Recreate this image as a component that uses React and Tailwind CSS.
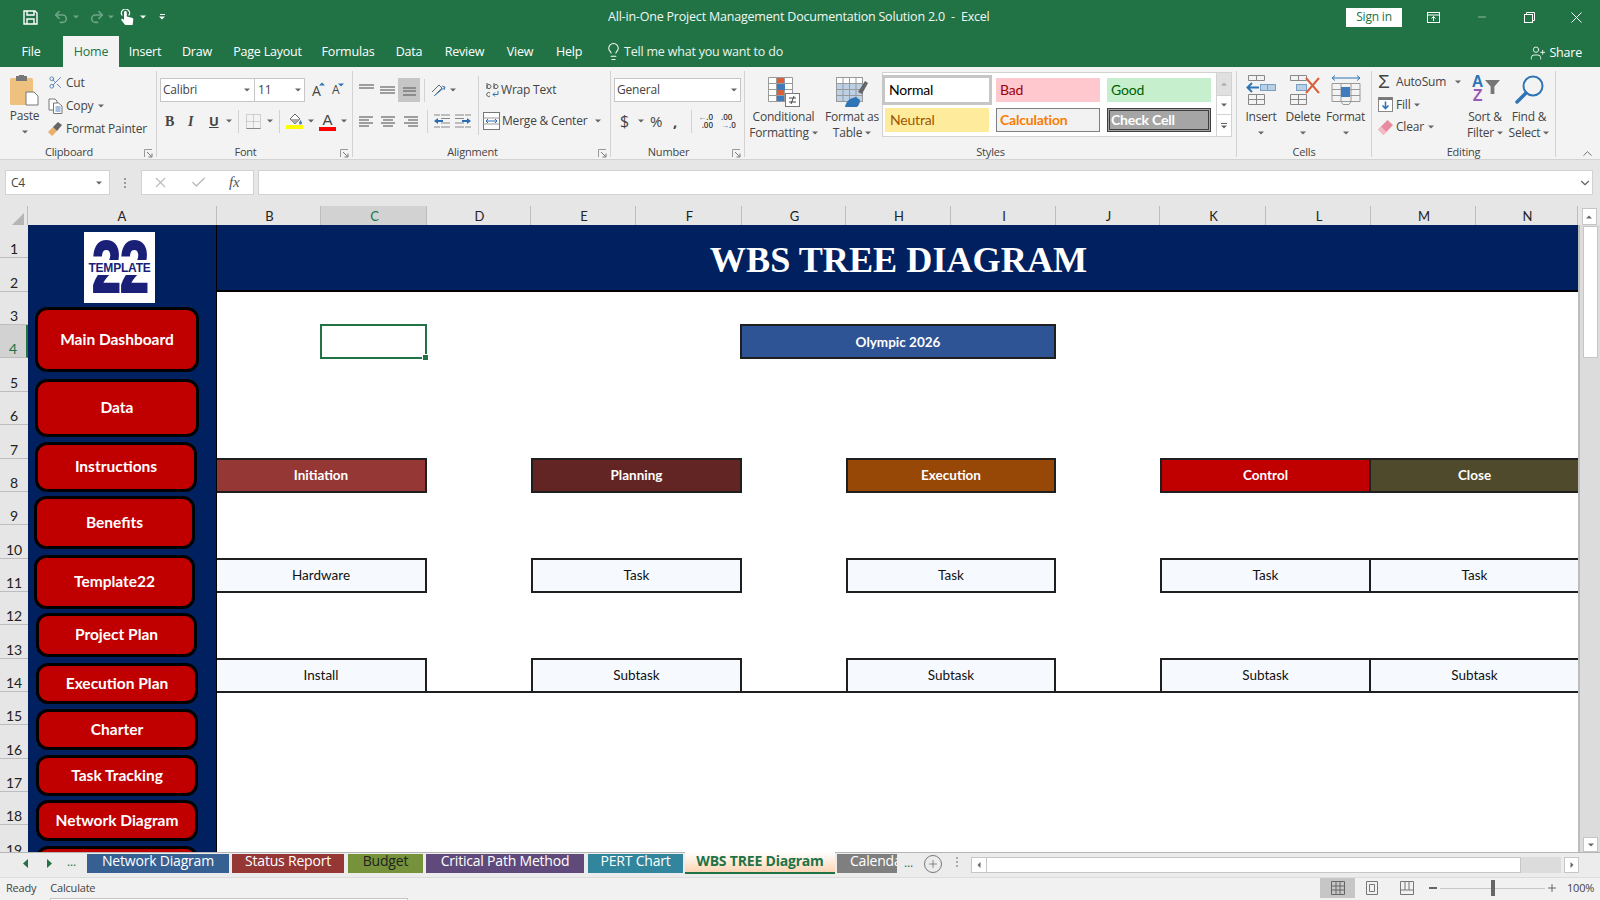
import React from "react";
import { Scissors, Undo2, Redo2, Lightbulb, UserPlus, X, Check, Minus, Plus, ChevronDown, ChevronUp } from "lucide-react";

const Caret = ({ c = "#666", cls = "" }) => (
  <svg width="6" height="4" viewBox="0 0 6 4" className={"shrink-0 " + cls}><path d="M0 0.5h6L3 3.5z" fill={c} /></svg>
);

const Launcher = () => (
  <svg width="9" height="9" viewBox="0 0 9 9" className="mt-[3px] justify-self-end mr-[3px]"><path d="M0.5 8V0.5H8" fill="none" stroke="#999" /><path d="M3 3l4.5 4.5M8 4.5V8H4.5" fill="none" stroke="#777" /></svg>
);

const Group = ({ w, label, launcher, children }) => (
  <div className={"h-[86px] shrink-0 border-r border-[#d2d2d2] flex flex-col " + w}>
    <div className="h-[74px] shrink-0 flex">{children}</div>
    {launcher ? (
      <div className="h-[14px] grid grid-cols-[1fr_18px] items-center text-[11px] leading-[14px] text-[#444]">
        <span className="text-center">{label}</span>
        <Launcher />
      </div>
    ) : (
      <div className="h-[14px] text-center text-[11px] leading-[14px] text-[#444]">{label}</div>
    )}
  </div>
);

const Lines = ({ rows }) => (
  <svg width="15" height="13" viewBox="0 0 15 13">
    {rows.map((r, i) => (
      <path key={i} d={`M${r[0]} ${r[1]}H${r[2]}`} stroke="#666" strokeWidth="1.2" />
    ))}
  </svg>
);

const Save = () => (
  <svg width="15" height="15" viewBox="0 0 15 15" fill="none" stroke="#fff" strokeWidth="1.4"><path d="M1 1h11l2 2v11H1z" /><path d="M4 1v4h7V1M4 14V9h7v5" /></svg>
);

const TouchIcon = () => (
  <svg width="14" height="16" viewBox="0 0 14 16" className="ml-[6px]">
    <path d="M2.3 6.5a4 4 0 1 1 6.4 0" fill="none" stroke="#fff" strokeWidth="1.2" />
    <path d="M4 3.5a1.4 1.4 0 0 1 2.8 0v4l5 1.2c1.2.3 1.7 1 1.5 2.2L12.6 16H5.2L1.4 11.2c-.6-.9.6-2 1.5-1.2L4 11z" fill="#fff" />
  </svg>
);

const PasteIcon = () => (
  <svg width="29" height="31" viewBox="0 0 29 31">
    <rect x="0" y="3" width="23" height="27" rx="1.5" fill="#eec27e" />
    <rect x="6" y="1" width="11" height="5" fill="#777" />
    <rect x="9" y="0" width="5" height="3" fill="#777" />
    <path d="M16 17h8l4 4v9H16z" fill="#fff" stroke="#777" />
  </svg>
);

const CopyIcon = () => (
  <svg width="15" height="16" viewBox="0 0 15 16" fill="#fff" stroke="#777"><path d="M1 1h6l2 2v9H1z" /><path d="M5.5 5h5l3.5 3v7.5H5.5z" /><path d="M7.5 9h5M7.5 11h5M7.5 13h5" stroke="#4a7ebb" /></svg>
);

const PainterIcon = () => (
  <svg width="15" height="14" viewBox="0 0 15 14"><path d="M0 10l5-5 4 4-5 5z" fill="#e8b06a" /><path d="M5 5l5-5 4 3-5 6z" fill="#666" /></svg>
);

const BordersIcon = () => (
  <svg width="15" height="15" viewBox="0 0 15 15" fill="none"><path d="M.5.5h14v14H.5zM7.5.5v14M.5 7.5h14" stroke="#aaa" strokeDasharray="1 1" /><path d="M.5 14.5h14" stroke="#888" /></svg>
);

const FillIcon = () => (
  <svg width="17" height="16" viewBox="0 0 17 16"><path d="M4 6l5-5 5 5-5 5z" fill="#fff" stroke="#666" /><path d="M4 6h10l-5 5z" fill="#aaa" /><path d="M14.5 7s1.5 2 1.5 3a1.5 1.5 0 01-3 0c0-1 1.5-3 1.5-3z" fill="#4a7ebb" /><rect y="12" width="17" height="4" fill="#ffff00" /></svg>
);

const OrientIcon = () => (
  <svg width="16" height="15" viewBox="0 0 16 15" fill="none" stroke="#666"><path d="M1 9l7-7 3 3-7 7" /><path d="M3 13l11-9M11 3l3 1-1 3" stroke="#4a7ebb" /></svg>
);

const Indent = ({ flip }) => (
  <svg width="16" height="14" viewBox="0 0 16 14" className={flip ? "-scale-x-100" : ""}>
    <path d="M7 1h9M7 4.5h9M7 9h9M7 13h9M0 13h6M0 1h6" stroke="#888" strokeWidth="1.2" />
    <path d="M0 7l4-3v2h5v2H4v2z" fill="#2b6cb0" />
  </svg>
);

const MergeIcon = () => (
  <svg width="17" height="18" viewBox="0 0 17 18" fill="none"><rect x=".5" y=".5" width="16" height="17" fill="#fff" stroke="#777" /><path d="M.5 6h16M.5 12h16" stroke="#999" /><path d="M3 9h11M3 9l2-2M3 9l2 2M14 9l-2-2M14 9l-2 2" stroke="#2b6cb0" /></svg>
);

const CondIcon = () => (
  <svg width="32" height="30" viewBox="0 0 32 30">
    <path d="M.5.5h24v24H.5zM8.5.5v24M16.5.5v24M.5 6.5h24M.5 12.5h24M.5 18.5h24" fill="#fff" stroke="#999" />
    <rect x="9" y="1" width="7" height="5" fill="#d9603b" /><rect x="9" y="7" width="8" height="6" fill="#3f7cbf" /><rect x="9" y="13" width="7" height="5" fill="#d9603b" /><rect x="9" y="19" width="7" height="5" fill="#3f7cbf" />
    <rect x="17.5" y="16.5" width="14" height="13" fill="#fff" stroke="#777" />
    <path d="M21 21h7M21 25h7M26 19l-3 8" stroke="#444" />
  </svg>
);

const TableIcon = () => (
  <svg width="32" height="30" viewBox="0 0 32 30">
    <rect x=".5" y=".5" width="26" height="24" fill="#fff" stroke="#999" />
    <rect x="1" y="7" width="25" height="17" fill="#bcd0e6" />
    <path d="M7 .5v24M13.5 .5v24M20 .5v24M.5 6.5h26M.5 12.5h26M.5 18.5h26" stroke="#999" />
    <path d="M22 15l7-11 3 2-6 11z" fill="#666" />
    <path d="M9 30c1-6 5-9 11-10l4 3c0 3-1 5-3 7z" fill="#2f75b5" />
  </svg>
);

const InsertIcon = () => (
  <svg width="30" height="30" viewBox="0 0 30 30" fill="none">
    <path d="M2.5.5h16v5h-16zM10.5.5v5M2.5 19.5h16v10h-16zM10.5 19.5v10M2.5 24.5h16" stroke="#888" />
    <rect x="14.5" y="9.5" width="15" height="6" fill="#b8cfe6" stroke="#7a9fc4" />
    <path d="M21.5 9.5v6" stroke="#7a9fc4" />
    <path d="M13 12.5H2M6 8l-4.5 4.5L6 17" stroke="#2f75b5" strokeWidth="2" />
  </svg>
);

const DeleteIcon = () => (
  <svg width="30" height="30" viewBox="0 0 30 30" fill="none" className="ml-[3px]">
    <path d="M.5.5h16v5H.5zM8.5.5v5M.5 19.5h16v10H.5zM8.5 19.5v10M.5 24.5h16" stroke="#888" />
    <rect x="6.5" y="9.5" width="10" height="6" fill="#b8cfe6" stroke="#7a9fc4" />
    <path d="M16 3l13 15M29 3L16 18" stroke="#d9603b" strokeWidth="2" />
  </svg>
);

const FormatIcon = () => (
  <svg width="30" height="30" viewBox="0 0 30 30" fill="none">
    <path d="M1 3h28M1 3l3-2.5M1 3l3 2.5M29 3l-3-2.5M29 3l-3 2.5" stroke="#2f75b5" />
    <path d="M1 8.5h28v18H1zM1 14.5h28M1 20.5h28M10 8.5v18M20 8.5v18" stroke="#999" />
    <rect x="10" y="12" width="9" height="10" fill="#3f7cbf" />
    <path d="M10 26.5l2 3h6l2-3" stroke="#999" />
  </svg>
);

const FillDown = () => (
  <svg width="15" height="15" viewBox="0 0 15 15" fill="none"><rect x=".5" y=".5" width="14" height="14" fill="#fff" stroke="#888" /><rect x=".5" y=".5" width="14" height="2.5" fill="#777" /><path d="M7.5 4.5v7M4.5 8.5l3 3 3-3" stroke="#2f75b5" strokeWidth="1.6" /></svg>
);

const Eraser = () => (
  <svg width="15" height="15" viewBox="0 0 15 15"><path d="M0 9.5L9.5 0 15 5 5.5 15z" fill="#e88b9c" /><path d="M0 9.5L3 6.5 8.5 12 5.5 15z" fill="#f3bcc5" /></svg>
);

const SortIcon = () => (
  <div className="flex items-center h-[28px]">
    <div className="flex flex-col items-center leading-[14px] font-bold text-[16px] font-['Liberation_Sans',sans-serif] w-[14px]">
      <span className="text-[#2f75b5]">A</span>
      <span className="text-[#9b59b6]">Z</span>
    </div>
    <svg width="15" height="15" viewBox="0 0 16 16" className="-mt-[6px]"><path d="M0 1h16l-6 7v8H6V8z" fill="#777" /></svg>
  </div>
);

const FindIcon = () => (
  <svg width="29" height="29" viewBox="0 0 29 29" fill="none"><circle cx="18" cy="11" r="9.5" stroke="#2f75b5" strokeWidth="2" /><path d="M11 18l-9 9" stroke="#2f75b5" strokeWidth="3.5" strokeLinecap="round" /></svg>
);

const Label2 = ({ a, b, caret }) => (
  <div className="flex flex-col items-center text-[12px] leading-[16px] text-[#444] whitespace-nowrap">
    <span>{a}</span>
    <span className="flex items-center gap-[3px] h-[16px]">{b}{caret && <Caret />}</span>
  </div>
);

const Sep = ({ h = "h-[23px]", ml }) => <div className={"w-px bg-[#d2d2d2] shrink-0 " + h + " " + ml} />;

const TitleBar = () => (
  <div className="h-[36px] pb-[2px] flex items-center text-white shrink-0">
    <div className="ml-[23px]"><Save /></div>
    <Undo2 size={16} strokeWidth={2.4} className="ml-[15px] text-[#6fa488]" />
    <Caret c="#6fa488" cls="ml-[4px]" />
    <Redo2 size={16} strokeWidth={2.4} className="ml-[10px] text-[#6fa488]" />
    <Caret c="#6fa488" cls="ml-[3px]" />
    <TouchIcon />
    <Caret c="#fff" cls="ml-[6px]" />
    <div className="ml-[13px] flex flex-col items-center gap-[1px]"><div className="w-[5px] h-px bg-white" /><Caret c="#fff" /></div>
    <div className="ml-[443px] w-[380px] text-center text-[12.5px] whitespace-nowrap text-[#f2f7f4]">All-in-One Project Management Documentation Solution 2.0&nbsp; -&nbsp; Excel</div>
    <div className="ml-[358px] w-[56px] h-[19px] bg-white text-[#217346] text-[12px] flex items-center justify-center">Sign in</div>
    <svg width="13" height="11" viewBox="0 0 13 11" className="ml-[25px]" fill="none" stroke="#fff"><rect x=".5" y=".5" width="12" height="10" /><path d="M.5 3h12" /><path d="M6.5 9V4.5M4.5 6.5l2-2 2 2" /></svg>
    <Minus size={12} strokeWidth={1} className="ml-[36px] text-white" />
    <svg width="11" height="11" viewBox="0 0 11 11" className="ml-[36px]" fill="none" stroke="#fff"><rect x=".5" y="2.5" width="8" height="8" /><path d="M2.5 2.5v-2h8v8h-2" /></svg>
    <svg width="11" height="11" viewBox="0 0 11 11" className="ml-[36px]" stroke="#fff"><path d="M.5.5l10 10M10.5.5l-10 10" /></svg>
  </div>
);

const tabs = [
  ["File", "w-[44px] mr-[10px]"],
  ["Home", "w-[56px]"],
  ["Insert", "w-[52px]"],
  ["Draw", "w-[52px]"],
  ["Page Layout", "w-[89px]"],
  ["Formulas", "w-[72px]"],
  ["Data", "w-[50px]"],
  ["Review", "w-[61px]"],
  ["View", "w-[50px]"],
  ["Help", "w-[48px]"],
];

const TabsRow = () => (
  <div className="h-[31px] flex items-stretch text-white text-[12.5px] shrink-0 pl-[9px]">
    {tabs.map(([t, w]) => (
      <div key={t} className={"flex items-center justify-center pt-[2px] " + w + (t === "Home" ? " bg-[#f3f3f3] text-[#217346]" : "")}>{t}</div>
    ))}
    <Lightbulb size={19} strokeWidth={1.3} className="ml-[11px] self-center" />
    <span className="ml-[1px] self-center pt-[2px] text-[12.5px] whitespace-nowrap text-[#eaf3ee]">Tell me what you want to do</span>
    <div className="ml-auto mr-[18px] pt-[3px] flex items-center gap-[3px]">
      <UserPlus size={16} strokeWidth={1.3} />
      <span>Share</span>
    </div>
  </div>
);

const Clipboard = () => (
  <Group w="w-[157px]" label="Clipboard" launcher>
    <div className="ml-[9px] w-[31px] flex flex-col items-center pt-[4px] text-[12px] text-[#444]">
      <PasteIcon />
      <span className="mt-[2px] leading-[16px]">Paste</span>
      <Caret cls="mt-[6px]" />
    </div>
    <div className="ml-[8px] flex flex-col text-[12px] text-[#444] whitespace-nowrap">
      <div className="h-[23px] flex items-center"><Scissors size={15} strokeWidth={1.4} className="text-[#4a7ebb]" /><span className="ml-[3px]">Cut</span></div>
      <div className="h-[23px] flex items-center"><CopyIcon /><span className="ml-[3px]">Copy</span><Caret cls="ml-[5px]" /></div>
      <div className="h-[23px] flex items-center"><PainterIcon /><span className="ml-[3px]">Format Painter</span></div>
    </div>
  </Group>
);

const Font = () => (
  <Group w="w-[196px]" label="Font" launcher>
    <div className="flex flex-col pt-[7px] pl-[3px] text-[#444]">
      <div className="flex items-center h-[24px]">
        <div className="w-[95px] h-[24px] bg-white border border-[#c6c6c6] flex items-center justify-between pl-[2px] pr-[4px] text-[12px]"><span>Calibri</span><Caret /></div>
        <div className="w-[50px] h-[24px] bg-white border border-l-0 border-[#c6c6c6] flex items-center justify-between px-[3px] text-[12px]"><span>11</span><Caret /></div>
        <div className="ml-[7px] w-[13px] text-[14px] flex items-start"><span>A</span><Caret c="#2f75b5" cls="mt-[2px] rotate-180 -ml-[2px]" /></div>
        <div className="ml-[7px] w-[13px] text-[12px] flex items-start"><span>A</span><Caret c="#2f75b5" cls="mt-[2px] -ml-[1px]" /></div>
      </div>
      <div className="flex items-center h-[24px] mt-[7px] text-[13px]">
        <span className="ml-[5px] w-[8px] font-bold font-['Liberation_Serif',serif] text-[14px]">B</span>
        <span className="ml-[15px] w-[8px] italic font-bold font-['Liberation_Serif',serif] text-[14px]">I</span>
        <span className="ml-[13px] w-[9px] font-bold underline text-[13px] leading-[14px]">U</span>
        <Caret cls="ml-[8px]" />
        <Sep ml="ml-[6px]" />
        <div className="ml-[7px]"><BordersIcon /></div>
        <Caret cls="ml-[6px]" />
        <Sep ml="ml-[6px]" />
        <div className="ml-[6px]"><FillIcon /></div>
        <Caret cls="ml-[5px]" />
        <div className="ml-[5px] w-[17px] flex flex-col items-center h-[20px] justify-end"><span className="text-[15px] leading-[15px] font-['Liberation_Sans',sans-serif]">A</span><div className="w-[17px] h-[4px] bg-[#ff0000]" /></div>
        <Caret cls="ml-[5px]" />
      </div>
    </div>
  </Group>
);

const WrapIcon = () => (
  <svg width="16" height="18" viewBox="0 0 16 18" fill="none" className="shrink-0">
    <path d="M3 8V2M3 5.5a2 2 0 1 1 0 .1M10 8V2" stroke="#555" />
    <path d="M10 5.5a2 2 0 1 1 0 .1" stroke="#555" />
    <path d="M6 12a2 2 0 1 0 0 3" stroke="#555" />
    <path d="M14 10v3.5H9M11 11.5l-2 2 2 2" stroke="#2f75b5" />
  </svg>
);

const Alignment = () => (
  <Group w="w-[258px]" label="Alignment" launcher>
    <div className="flex flex-col pt-[7px] pl-[6px]">
      <div className="flex items-center h-[24px]">
        <Lines rows={[[0, 1, 15], [0, 4, 15]]} />
        <div className="ml-[6px]"><Lines rows={[[0, 3, 15], [0, 6, 15], [0, 9, 15]]} /></div>
        <div className="ml-[3px] w-[22px] h-[24px] bg-[#c6c6c6] flex items-center justify-center"><Lines rows={[[1, 4, 14], [1, 7, 14], [1, 11, 14]]} /></div>
        <Sep ml="ml-[4px]" />
        <div className="ml-[6px]"><OrientIcon /></div>
        <Caret cls="ml-[3px]" />
      </div>
      <div className="flex items-center h-[24px] mt-[7px]">
        <Lines rows={[[0, 2, 14], [0, 5, 10], [0, 8, 14], [0, 11, 10]]} />
        <div className="ml-[7px]"><Lines rows={[[0, 2, 14], [2, 5, 12], [0, 8, 14], [2, 11, 12]]} /></div>
        <div className="ml-[7px] w-[18px]"><Lines rows={[[1, 2, 15], [5, 5, 15], [1, 8, 15], [5, 11, 15]]} /></div>
        <Sep ml="ml-[6px]" />
        <div className="ml-[6px]"><Indent /></div>
        <div className="ml-[5px]"><Indent flip /></div>
      </div>
    </div>
    <Sep h="h-[59px]" ml="ml-[7px] mt-[5px]" />
    <div className="flex flex-col pt-[7px] text-[12px] text-[#444] whitespace-nowrap">
      <div className="flex items-center h-[24px] ml-[5px]">
        <WrapIcon />
        <span className="ml-[1px]">Wrap Text</span>
      </div>
      <div className="flex items-center h-[24px] mt-[7px] ml-[4px]">
        <MergeIcon />
        <span className="ml-[2px]">Merge &amp; Center</span>
        <Caret cls="ml-[8px]" />
      </div>
    </div>
  </Group>
);

const NumberGroup = () => (
  <Group w="w-[134px]" label="Number" launcher>
    <div className="flex flex-col pt-[7px] pl-[3px] text-[#444]">
      <div className="w-[127px] h-[24px] bg-white border border-[#c6c6c6] flex items-center justify-between pl-[2px] pr-[3px] text-[12px]"><span>General</span><Caret /></div>
      <div className="flex items-center h-[24px] mt-[7px]">
        <span className="ml-[6px] w-[10px] text-[16px]">$</span>
        <Caret cls="ml-[8px]" />
        <span className="ml-[6px] w-[13px] text-[15px]">%</span>
        <span className="ml-[10px] w-[8px] text-[15px] font-bold leading-[14px]">,</span>
        <Sep ml="ml-[10px]" />
        <div className="ml-[6px] w-[15px] text-[8px] leading-[8px] text-right text-[#333] font-semibold tracking-normal"><div><span className="text-[#2f75b5]">←</span>.0</div><div>.00</div></div>
        <div className="ml-[8px] w-[15px] text-[8px] leading-[8px] text-[#333] font-semibold tracking-normal"><div>.00</div><div><span className="text-[#2f75b5]">→</span>.0</div></div>
      </div>
    </div>
  </Group>
);

const GalleryCell = ({ cls, children }) => (
  <div className={"h-[24px] flex items-center pb-[1px] text-[14px] font-['Lato',sans-serif] " + cls}>{children}</div>
);

const Styles = () => (
  <Group w="w-[492px]" label="Styles">
    <div className="ml-[2px] w-[73px] flex flex-col items-center pt-[6px]">
      <CondIcon />
      <div className="mt-[2px]"><Label2 a="Conditional" b="Formatting" caret /></div>
    </div>
    <div className="ml-[3px] w-[58px] flex flex-col items-center pt-[6px]">
      <TableIcon />
      <div className="mt-[2px]"><Label2 a="Format as" b="Table" caret /></div>
    </div>
    <div className="ml-[1px] mt-[1px] w-[350px] h-[65px] bg-white border border-[#d2d2d2] flex pt-[5px] pl-[2px]">
      <div className="grid grid-cols-[104px_104px_104px] grid-rows-[24px_24px] gap-x-[7px] gap-y-[6px] w-[326px]">
        <GalleryCell cls="bg-white text-black border-[3px] border-[#c6c6c6] -m-[3px] pl-[4px] h-[30px]">Normal</GalleryCell>
        <GalleryCell cls="bg-[#ffc7ce] text-[#9c0006] pl-[4px]">Bad</GalleryCell>
        <GalleryCell cls="bg-[#c6efce] text-[#006100] pl-[4px]">Good</GalleryCell>
        <GalleryCell cls="bg-[#ffeb9c] text-[#9c5700] pl-[5px]">Neutral</GalleryCell>
        <GalleryCell cls="bg-[#f2f2f2] text-[#fa7d00] font-bold border border-[#7f7f7f] pl-[3px]">Calculation</GalleryCell>
        <GalleryCell cls="bg-[#a5a5a5] text-white font-bold border-[3px] border-double border-[#3f3f3f] pl-[1px]">Check Cell</GalleryCell>
      </div>
      <div className="ml-auto -mt-[5px] w-[15px] h-[63px] flex flex-col border-l border-[#d2d2d2]">
        <div className="h-[22px] bg-[#e0e0e0] flex items-center justify-center"><Caret c="#aaa" cls="rotate-180" /></div>
        <div className="h-[20px] border-y border-[#d2d2d2] flex items-center justify-center"><Caret /></div>
        <div className="h-[21px] flex flex-col items-center justify-center gap-[1px]"><div className="w-[6px] h-px bg-[#666]" /><Caret /></div>
      </div>
    </div>
  </Group>
);

const CellCol = ({ w, ml, icon, label }) => (
  <div className={"flex flex-col items-center pt-[4px] text-[12px] text-[#444] " + w + " " + ml}>
    {icon}
    <span className="mt-[4px] leading-[16px]">{label}</span>
    <Caret cls="mt-[6px]" />
  </div>
);

const Cells = () => (
  <Group w="w-[135px]" label="Cells">
    <CellCol w="w-[34px]" ml="ml-[7px]" icon={<InsertIcon />} label="Insert" />
    <CellCol w="w-[36px]" ml="ml-[7px]" icon={<DeleteIcon />} label="Delete" />
    <CellCol w="w-[39px]" ml="ml-[5px]" icon={<FormatIcon />} label="Format" />
  </Group>
);

const Editing = () => (
  <Group w="w-[184px]" label="Editing">
    <div className="ml-[6px] w-[90px] flex flex-col text-[12px] text-[#444] whitespace-nowrap">
      <div className="h-[22px] flex items-center"><span className="w-[14px] text-[19px] leading-[18px] font-['Liberation_Sans',sans-serif]">Σ</span><span className="ml-[4px]">AutoSum</span><Caret cls="ml-[9px]" /></div>
      <div className="h-[23px] flex items-center"><FillDown /><span className="ml-[3px]">Fill</span><Caret cls="ml-[4px]" /></div>
      <div className="h-[22px] flex items-center"><Eraser /><span className="ml-[3px]">Clear</span><Caret cls="ml-[4px]" /></div>
    </div>
    <div className="w-[44px] -ml-[5px] flex flex-col items-center pt-[4px]">
      <SortIcon />
      <div className="mt-[6px]"><Label2 a="Sort &" b="Filter" caret /></div>
    </div>
    <div className="w-[44px] flex flex-col items-center pt-[4px]">
      <FindIcon />
      <div className="mt-[5px]"><Label2 a="Find &" b="Select" caret /></div>
    </div>
  </Group>
);

const Ribbon = () => (
  <div className="h-[93px] bg-[#f3f3f3] shrink-0 flex pt-[4px] border-b border-[#d2d2d2]">
    <Clipboard />
    <Font />
    <Alignment />
    <NumberGroup />
    <Styles />
    <Cells />
    <Editing />
    <ChevronUp size={15} strokeWidth={1.5} className="ml-[24px] mt-[75px] text-[#666]" />
  </div>
);

const FormulaBar = () => (
  <div className="h-[46px] bg-[#e6e6e6] shrink-0 flex pt-[10px] text-[#444]">
    <div className="ml-[5px] w-[105px] h-[25px] bg-white border border-[#d2d2d2] flex items-center justify-between px-[5px] text-[12px]"><span>C4</span><Caret cls="mr-[2px]" /></div>
    <div className="ml-[14px] h-[25px] flex flex-col justify-center gap-[2px]"><div className="w-[2px] h-[2px] bg-[#999]" /><div className="w-[2px] h-[2px] bg-[#999]" /><div className="w-[2px] h-[2px] bg-[#999]" /></div>
    <div className="ml-[15px] w-[113px] h-[25px] bg-white border border-[#d2d2d2] flex items-center">
      <X size={17} strokeWidth={1.5} className="ml-[10px] text-[#bbb]" />
      <Check size={17} strokeWidth={2} className="ml-[21px] text-[#bbb]" />
      <span className="ml-[22px] text-[15px] italic font-['Liberation_Serif',serif] text-[#555]">fx</span>
    </div>
    <div className="ml-[4px] w-[1335px] h-[25px] bg-white border border-[#d2d2d2] flex items-center justify-end pt-[1px]"><ChevronDown size={14} strokeWidth={2} className="text-[#666]" /></div>
  </div>
);

const cols = ["B", "C", "D", "E", "F", "G", "H", "I", "J", "K", "L", "M", "N"];

const ColumnHeader = () => (
  <div className="h-[19px] bg-[#e6e6e6] shrink-0 grid grid-cols-[28px_189px_104px_106px_104px_105px_106px_104px_105px_105px_104px_106px_105px_105px_102px_1fr] text-[13px] leading-[21px] text-[#222] font-['Lato',sans-serif] tracking-normal">
    <div className="flex items-end justify-end pr-[3px] pb-[3px] border-r border-[#bdbdbd]">
      <svg width="13" height="13" viewBox="0 0 13 13"><path d="M13 0v13H0z" fill="#b5b5b5" /></svg>
    </div>
    <div className="text-center border-r border-[#bdbdbd]">A</div>
    {cols.map((c) => (
      <div key={c} className={"text-center pl-[2px] border-r border-[#bdbdbd]" + (c === "C" ? " bg-[#d2d2d2] text-[#217346] border-b-2 border-b-[#217346]" : "")}>{c}</div>
    ))}
    <div className="flex justify-center items-start pt-[2px]">
      <div className="w-[15px] h-[17px] bg-white border border-[#c6c6c6] flex items-center justify-center"><Caret c="#666" cls="rotate-180" /></div>
    </div>
  </div>
);

const rows = Array.from({ length: 19 }, (_, i) => i + 1);

const RowHeaders = () => (
  <div className="w-[28px] shrink-0 grid grid-rows-[repeat(19,33.37px)] bg-[#e6e6e6] text-[14px] text-[#222] font-['Lato',sans-serif] tracking-normal overflow-hidden">
    {rows.map((r) => (
      <div key={r} className={"flex items-end justify-center leading-[16px] border-b border-[#bdbdbd]" + (r === 4 ? " bg-[#d2d2d2] text-[#217346] border-r-2 border-r-[#217346]" : "")}>{r}</div>
    ))}
  </div>
);

const navButtons = [
  ["Main Dashboard", "mt-[4px] ml-[7px] w-[164px] h-[65px]"],
  ["Data", "mt-[7px] ml-[7px] w-[164px] h-[58px]"],
  ["Instructions", "mt-[5px] ml-[7px] w-[162px] h-[50px]"],
  ["Benefits", "mt-[4px] ml-[6px] w-[161px] h-[53px]"],
  ["Template22", "mt-[6px] ml-[6px] w-[161px] h-[54px]"],
  ["Project Plan", "mt-[4px] ml-[8px] w-[161px] h-[44px]"],
  ["Execution Plan", "mt-[6px] ml-[8px] w-[162px] h-[41px]"],
  ["Charter", "mt-[5px] ml-[8px] w-[162px] h-[41px]"],
  ["Task Tracking", "mt-[5px] ml-[8px] w-[162px] h-[41px]"],
  ["Network Diagram", "mt-[4px] ml-[8px] w-[162px] h-[41px]"],
  ["", "mt-[5px] ml-[8px] w-[162px] h-[41px]"],
];

const Logo = () => (
  <div className="ml-[56px] mt-[7px] w-[71px] h-[71px] bg-white relative shrink-0 flex items-center justify-center">
    <span className="text-[#1a1f78] font-bold font-['Liberation_Sans',sans-serif] text-[72px] leading-[71px] w-[60px] flex justify-center scale-x-[0.72] [-webkit-text-stroke:2px_#1a1f78] tracking-[-1px]">22</span>
    <div className="absolute left-0 right-0 top-[28px] h-[15px] bg-white flex items-center justify-center text-[#1a1f78] font-bold font-['Liberation_Sans',sans-serif] text-[12px] tracking-[-0.2px]">TEMPLATE</div>
  </div>
);

const Sidebar = () => (
  <div className="w-[189px] shrink-0 bg-[#002060] flex flex-col overflow-hidden border-r border-black">
    <Logo />
    {navButtons.map(([t, c], i) => (
      <div key={i} className={"shrink-0 box-border bg-[#c00000] border-[3px] border-black rounded-[12px] flex items-center justify-center text-white font-bold text-[15.5px] tracking-normal font-['Lato',sans-serif] " + c}>{t}</div>
    ))}
  </div>
);

const boxBase = "-mt-px -mb-px box-border border-2 border-[#1f1f1f] flex items-center justify-center text-[13.5px] tracking-normal font-['Lato',sans-serif] col-span-2";

const Phase = ({ cls, children }) => <div className={boxBase + " text-white font-bold " + cls}>{children}</div>;
const Leaf = ({ cls, children }) => <div className={boxBase + " bg-[#f6f9fe] text-[#111] " + cls}>{children}</div>;

const Sheet = () => (
  <div className="w-[1361px] shrink-0 bg-white grid grid-cols-[104px_106px_104px_105px_106px_104px_105px_105px_104px_106px_105px_105px_102px] grid-rows-[repeat(19,33.37px)] overflow-hidden">
    <div className="col-span-full row-start-1 row-span-2 col-start-1 bg-[#002060] border-b-2 border-black flex items-center justify-center pt-[6px] pl-[2px] text-white font-bold text-[36.2px] tracking-normal font-['Liberation_Serif',serif]">WBS TREE DIAGRAM</div>

    <div className="col-start-2 row-start-4 -mt-px -mb-px -ml-px border-2 border-[#217346] relative">
      <div className="absolute -right-[3px] -bottom-[3px] w-[5px] h-[5px] bg-[#217346] border border-white box-content -m-px" />
    </div>

    <div className="col-start-6 col-span-3 row-start-4 -mt-px -mb-px -ml-[2px] box-border border-2 border-[#1f1f1f] bg-[#2f5496] flex items-center justify-center text-white font-bold text-[13.5px] tracking-normal font-['Lato',sans-serif]">Olympic 2026</div>

    <Phase cls="col-start-1 row-start-8 border-l-0 bg-[#953735]">Initiation</Phase>
    <Phase cls="col-start-4 row-start-8 bg-[#632523]">Planning</Phase>
    <Phase cls="col-start-7 row-start-8 bg-[#974706]">Execution</Phase>
    <Phase cls="col-start-10 row-start-8 bg-[#c00000]">Control</Phase>
    <Phase cls="col-start-12 row-start-8 border-x-0 bg-[#4f4a2b]">Close</Phase>

    <Leaf cls="col-start-1 row-start-11 border-l-0">Hardware</Leaf>
    <Leaf cls="col-start-4 row-start-11">Task</Leaf>
    <Leaf cls="col-start-7 row-start-11">Task</Leaf>
    <Leaf cls="col-start-10 row-start-11">Task</Leaf>
    <Leaf cls="col-start-12 row-start-11 border-x-0">Task</Leaf>

    <div className="col-start-1 col-span-full row-start-14 border-b-2 border-[#1f1f1f] -mb-px" />
    <Leaf cls="col-start-1 row-start-14 border-l-0">Install</Leaf>
    <Leaf cls="col-start-4 row-start-14">Subtask</Leaf>
    <Leaf cls="col-start-7 row-start-14">Subtask</Leaf>
    <Leaf cls="col-start-10 row-start-14">Subtask</Leaf>
    <Leaf cls="col-start-12 row-start-14 border-x-0">Subtask</Leaf>
  </div>
);

const VScroll = () => (
  <div className="w-[22px] shrink-0 bg-[#dcdcdc] border-l-2 border-[#bdbdbd] flex flex-col items-center pl-[1px]">
    <div className="w-[15px] h-[132px] bg-white border border-[#c6c6c6] mt-[1px]" />
    <div className="mt-auto w-[15px] h-[15px] bg-white border border-[#c6c6c6] flex items-center justify-center"><Caret /></div>
  </div>
);

const sheetTabs = [
  ["Network Diagram", "ml-[10px] w-[142px] bg-[#376092] text-white"],
  ["Status Report", "ml-[3px] w-[112px] bg-[#953735] text-white"],
  ["Budget", "ml-[4px] w-[75px] bg-[#76933c] text-[#222]"],
  ["Critical Path Method", "ml-[3px] w-[158px] bg-[#604a7b] text-white"],
  ["PERT Chart", "ml-[4px] w-[95px] bg-[#31859c] text-white"],
];

const NavArrow = ({ flip }) => (
  <svg width="5" height="9" viewBox="0 0 5 9" className={flip ? "-scale-x-100" : ""}><path d="M5 0v9L0 4.5z" fill="#217346" /></svg>
);

const TabBar = () => (
  <div className="h-[25px] bg-[#ececec] shrink-0 border-t border-[#b5b5b5] flex items-start text-[14px]">
    <div className="h-[21px] flex items-center ml-[23px] gap-[19px]">
      <NavArrow />
      <NavArrow flip />
    </div>
    <span className="ml-[15px] w-[10px] h-[22px] leading-[18px] text-[#217346] text-[12px]">...</span>
    {sheetTabs.map(([t, c]) => (
      <div key={t} className={"mt-[1px] h-[19px] flex justify-center leading-[14px] whitespace-nowrap " + c}>{t}</div>
    ))}
    <div className="ml-[2px] -mt-px w-[150px] h-[22px] bg-gradient-to-b from-white to-[#fcd5b4] border-b-2 border-[#217346] text-[#217346] font-bold flex justify-center leading-[18px] whitespace-nowrap">WBS TREE Diagram</div>
    <div className="ml-[2px] mt-[1px] w-[60px] h-[19px] bg-[#7f7f7f] text-white leading-[14px] pl-[13px] overflow-hidden whitespace-nowrap">Calendar</div>
    <span className="ml-[7px] w-[10px] mt-[1px] text-[12px] leading-[18px] text-[#217346]">...</span>
    <div className="ml-[10px] mt-[2px] w-[18px] h-[18px] rounded-full border border-[#777] flex items-center justify-center text-[#666]"><Plus size={12} strokeWidth={1.5} /></div>
    <div className="ml-[14px] mt-[4px] flex flex-col gap-[2px]"><div className="w-[2px] h-[2px] bg-[#aaa]" /><div className="w-[2px] h-[2px] bg-[#aaa]" /><div className="w-[2px] h-[2px] bg-[#aaa]" /></div>
    <div className="ml-[13px] mt-[4px] h-[16px] flex">
      <div className="w-[16px] bg-white border border-[#c6c6c6] flex items-center justify-center"><Caret cls="rotate-90" /></div>
      <div className="w-[534px] bg-white border-y border-r border-[#c6c6c6]" />
      <div className="w-[40px] bg-[#dcdcdc]" />
      <div className="ml-[3px] w-[15px] bg-white border border-[#c6c6c6] flex items-center justify-center"><Caret cls="-rotate-90" /></div>
    </div>
  </div>
);

const StatusBar = () => (
  <div className="h-[23px] bg-[#f1f1f1] shrink-0 border-t border-[#dcdcdc] flex flex-col text-[11px] text-[#444]">
    <div className="h-[20px] flex items-center">
      <span className="ml-[6px]">Ready</span>
      <span className="ml-[14px]">Calculate</span>
      <div className="ml-auto h-full w-[35px] bg-[#c6c6c6] flex items-center justify-center">
        <svg width="14" height="14" viewBox="0 0 14 14" fill="none" stroke="#666"><path d="M.5.5h13v13H.5zM5 .5v13M9 .5v13M.5 5h13M.5 9h13" /></svg>
      </div>
      <svg width="14" height="14" viewBox="0 0 14 14" fill="none" stroke="#777" className="ml-[10px]"><path d="M1.5.5h11v13h-11z" /><path d="M4.5 3.5h5v7h-5z" /></svg>
      <svg width="14" height="14" viewBox="0 0 14 14" fill="none" stroke="#777" className="ml-[21px]"><path d="M.5.5h13v13H.5zM.5 9h13M5 .5V9M9 .5V9" /></svg>
      <div className="ml-[15px] w-[8px] h-[2px] bg-[#666]" />
      <div className="ml-[3px] w-[105px] h-px bg-[#c6c6c6] flex items-center pl-[51px]"><div className="w-[4px] h-[16px] bg-[#666]" /></div>
      <Plus size={12} strokeWidth={2} className="ml-px text-[#666]" />
      <span className="ml-[9px] w-[26px] mr-[7px] whitespace-nowrap">100%</span>
    </div>
    <div className="mt-auto ml-[50px] w-[358px] h-[2px] bg-white border-t border-x border-[#c6c6c6]" />
  </div>
);

export default function App() {
  return (
    <div className="w-[1600px] h-[900px] overflow-hidden flex flex-col bg-[#217346] font-['Open_Sans',sans-serif] tracking-[-0.2px]">
      <TitleBar />
      <TabsRow />
      <Ribbon />
      <FormulaBar />
      <ColumnHeader />
      <div className="h-[627px] shrink-0 flex overflow-hidden bg-white">
        <RowHeaders />
        <Sidebar />
        <Sheet />
        <VScroll />
      </div>
      <TabBar />
      <StatusBar />
    </div>
  );
}
